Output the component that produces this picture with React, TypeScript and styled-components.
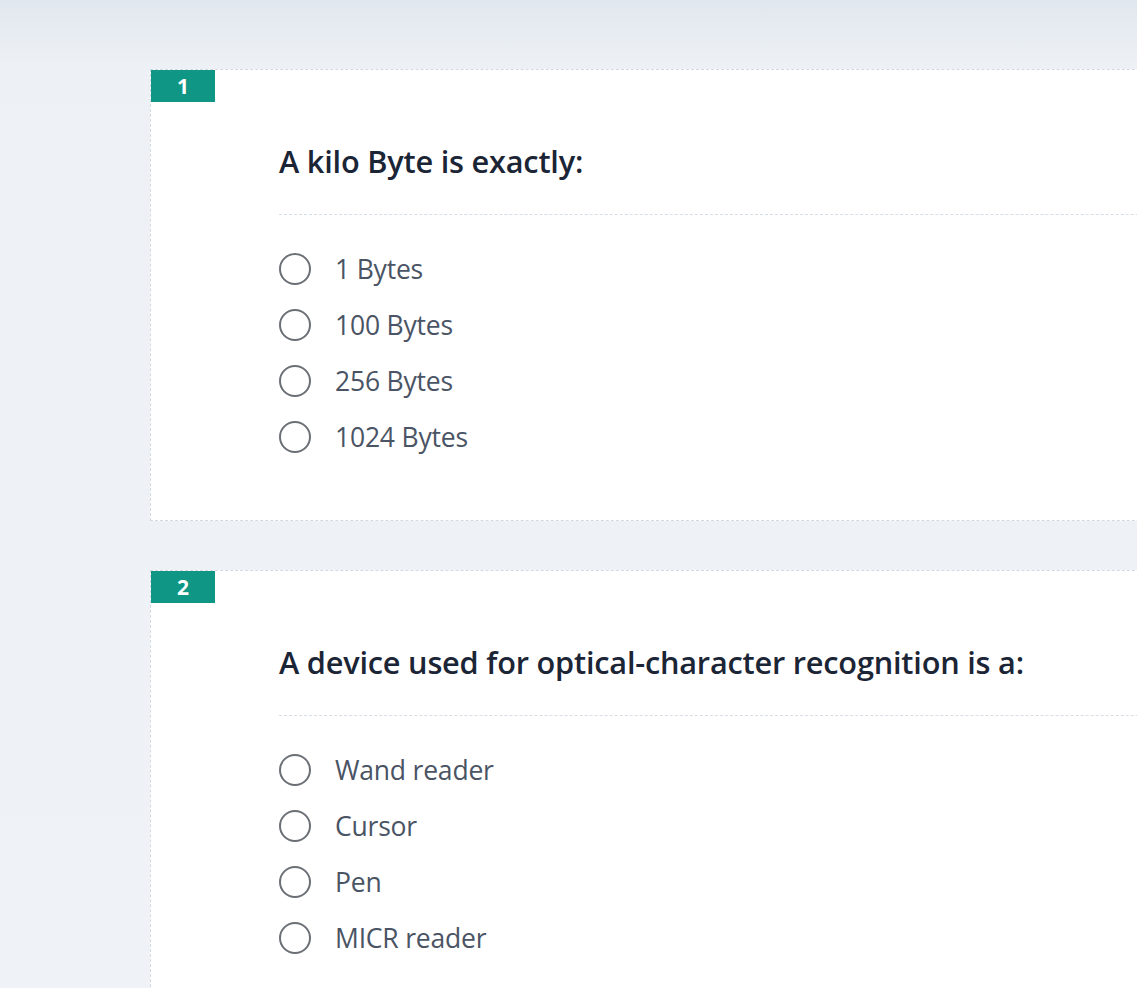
import React from "react";
import styled, { createGlobalStyle } from "styled-components";

const Global = createGlobalStyle`
  html, body { margin: 0; padding: 0; }
  body {
    background: #eff2f6;
    font-family: "Open Sans", "Noto Sans", sans-serif;
    overflow: hidden;
  }
`;

const Page = styled.div`
  min-height: 988px;
  background: linear-gradient(to bottom, #e1e7ee 0px, #edf1f5 66px, #eff2f6 100%);
  padding: 69px 0 0 150px;
  box-sizing: border-box;
`;

const List = styled.div`
  display: flex;
  flex-direction: column;
  gap: 49px;
`;

const Card = styled.section`
  position: relative;
  width: 1100px;
  background: #ffffff;
  border: 1px dashed #d2d9e1;
  box-sizing: border-box;
  padding: 69px 0 55px 128px;
`;

const Badge = styled.div`
  position: absolute;
  top: 0;
  left: 0;
  width: 64px;
  height: 32px;
  background: #109685;
  color: #ffffff;
  font-size: 21px;
  font-weight: 700;
  display: flex;
  align-items: center;
  justify-content: center;
  line-height: 1;
`;

const Title = styled.h2`
  margin: 0;
  font-size: 30.7px;
  line-height: 44px;
  font-weight: 600;
  color: #1b2535;
  letter-spacing: -0.2px;
`;

const Divider = styled.hr`
  margin: 31px 0 26px 0;
  border: none;
  border-top: 1px dashed #d8dee5;
  height: 0;
`;

const Options = styled.div`
  display: flex;
  flex-direction: column;
`;

const Option = styled.label`
  display: flex;
  align-items: center;
  height: 56px;
  gap: 24px;
  cursor: pointer;
`;

const Radio = styled.span`
  width: 32px;
  height: 32px;
  border-radius: 50%;
  border: 2px solid #6b6f76;
  box-sizing: border-box;
  flex: none;
`;

const OptionText = styled.span`
  font-size: 26.5px;
  color: #4a5464;
  letter-spacing: -0.2px;
`;

const questions = [
  { n: 1, q: "A kilo Byte is exactly:", opts: ["1 Bytes", "100 Bytes", "256 Bytes", "1024 Bytes"] },
  {
    n: 2,
    q: "A device used for optical-character recognition is a:",
    opts: ["Wand reader", "Cursor", "Pen", "MICR reader"],
  },
];

export default function App() {
  return (
    <>
      <Global />
      <Page>
        <List>
          {questions.map((item) => (
            <Card key={item.n}>
              <Badge>{item.n}</Badge>
              <Title>{item.q}</Title>
              <Divider />
              <Options>
                {item.opts.map((o) => (
                  <Option key={o}>
                    <Radio />
                    <OptionText>{o}</OptionText>
                  </Option>
                ))}
              </Options>
            </Card>
          ))}
        </List>
      </Page>
    </>
  );
}
